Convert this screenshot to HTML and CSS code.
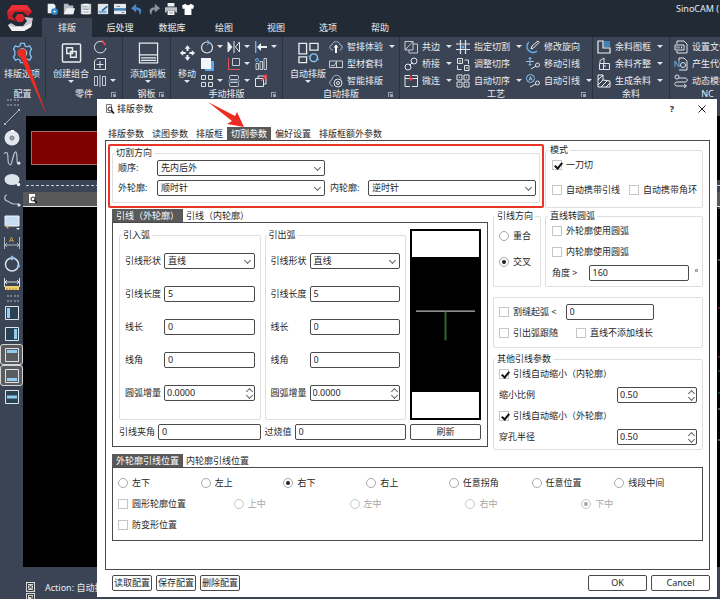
FILE: index.html
```html
<!DOCTYPE html>
<html lang="zh-CN">
<head>
<meta charset="utf-8">
<meta name="viewport" content="width=device-width, initial-scale=1">
<title>SinoCAM</title>
<link rel="stylesheet" href="styles.css">
</head>
<body>
<div class="app">
  <header class="header">
    <svg class="logo" viewBox="0 0 42 37" aria-hidden="true">
      <path d="m7 12 5-7h15l5 7-4 4-5-4h-8l-3 4 4 5-8-2z" fill="#c9202b"/>
      <path d="m7 12 5-7h15l5 7-5-2-12 0z" fill="#ee2f3a"/>
      <path d="m33 18-2 9-7 4H12l-4-6 3-2 5 3h7l4-5-3-4z" fill="#c6c6ca"/>
      <path d="m8 25 5 2h10l9-4-1 4-7 4H12z" fill="#f1f1f4"/>
      <path d="m15 18 2.500-4h5l2.500 4-2.500 4h-5z" fill="#e02833"/>
    </svg>
    <div class="header-main">
      <div class="quick">
        <nav class="quick-icons" aria-label="快速访问">
          <svg viewBox="0 0 14 14"><path d="M2 1h7l2 2v9H2z" fill="#eef1f4"/><circle cx="10" cy="10" r="4" fill="#2d87c6"/><circle cx="10" cy="10" r="1.200" fill="#fff"/></svg>
          <svg viewBox="0 0 14 14"><path d="M1 1h5l1 2h5v10H1z" fill="#b4babf"/><path d="M4 6h10l-2 7H1z" fill="#eef0f2"/></svg>
          <svg viewBox="0 0 14 14"><path d="M1 1h12v12H1z" fill="#ccd1d6"/><path d="M4 1h6v4H4zM3 8h8v5H3z" fill="#f4f6f8"/><path d="M4 7.500h6M4 4h5M4 10.500h6" stroke="#88919b"/></svg>
          <svg viewBox="0 0 14 14"><path d="M1 1h12v12H1z" fill="#dfe5ea"/><path d="M2 9h9v3H2z" fill="#7fb0d6"/><path d="m6 9 6-5" stroke="#27689d" stroke-width="2"/></svg>
          <svg viewBox="0 0 14 14"><path d="M0 1h14v12H0z" fill="#e6eaee"/><path d="M0 6h14v3H0z" fill="#3f81b3"/><path d="M3 4h4m2 7h3" stroke="#64727f"/></svg>
          <svg viewBox="0 0 14 14"><path d="M10 14c4-4 2-9-4-9V1L0 6l6 5V8c3 0 4 2 4 6z" fill="#4a86c4"/></svg>
          <svg viewBox="0 0 14 14"><path d="M4 14C0 10 2 5 8 5V1l6 5-6 5V8c-3 0-4 2-4 6z" fill="#8b949d"/></svg>
          <svg viewBox="0 0 14 14"><path d="M3 0h8v4H3zM3 9h8v5H3z" fill="#eef0f2"/><path d="M0 5h14v6h-2V9H2v2H0z" fill="#bdc3c9"/><path d="M5 11.500h4" stroke="#7b8590"/></svg>
          <svg viewBox="0 0 14 14"><path d="M4 1 0 3l1 4 2-.5V14h8V6.500l2 .5 1-4-4-2c-1 2-5 2-6 0z" fill="#fff"/></svg>
        </nav>
        <span class="app-title">SinoCAM (</span>
      </div>
      <nav class="menu" aria-label="功能区">
        <button class="on">排版</button><button>后处理</button><button>数据库</button><button>绘图</button><button>视图</button><button>选项</button><button>帮助</button>
      </nav>
    </div>
  </header>

  <div class="ribbon">
    <section class="group">
      <div class="tools">
        <button class="big flush"><svg viewBox="0 0 22 22" fill="none"><path d="M9 1h4l.7 2.700 2 .9L18.500 3.500 20.500 7 19 9v4l1.500 2-2 3.500-2.800-1.100-2 .9L13 21H9l-.7-2.700-2-.9L3.500 18.500l-2-3.500L3 13V9L1.500 7l2-3.500 2.800 1.100 2-.9z" stroke="#86bdea" stroke-width="1.400"/><circle cx="11" cy="11" r="4.500" stroke="#c8d6e4"/></svg><span>排版选项</span></button>
      </div>
      <footer>配置</footer>
    </section>

    <section class="group">
      <div class="tools">
        <button class="big"><svg viewBox="0 0 22 22" fill="none" stroke="#e8ecf0" stroke-width="1.500"><rect x="1.500" y="1.500" width="19" height="19" rx="1"/><path d="M6 5.500h6v6H6zM10 9.500h6v6h-6z"/></svg><span>创建组合</span><i class="caret"></i></button>
        <div class="stack icons">
          <button><svg viewBox="0 0 14 14" fill="none"><path d="M10 2A5.800 5.800 0 1 0 13 8" stroke="#dfe4e9"/><path d="M9 .5 12.500 5" stroke="#ef4650" stroke-width="1.600"/></svg></button>
          <button><svg viewBox="0 0 14 14" fill="none" stroke="#dfe4e9"><path d="M4 1.500h8.500v11h-11V4zM7 4v7M3.500 7.500h7"/></svg></button>
          <button><svg viewBox="0 0 14 14" fill="none" stroke="#c6ccd3"><path d="M1.500 2.500h3v9h-3zM9.500 2.500h3v9h-3zM7 1v12"/></svg><i class="caret"></i></button>
        </div>
      </div>
      <footer>零件<i class="launch"></i></footer>
    </section>

    <section class="group">
      <div class="tools">
        <button class="big"><svg viewBox="0 0 22 22" fill="none" stroke="#e8ecf0" stroke-width="1.300"><path d="M1.500.7h19v20.600h-19zM1.500 13h19M3 16h16M3 18.600h16"/></svg><span>添加钢板</span><i class="caret"></i></button>
      </div>
      <footer>钢板<i class="launch"></i></footer>
    </section>

    <section class="group">
      <div class="tools">
        <button class="big narrow"><svg viewBox="0 0 22 22" fill="#eef1f4"><path d="m11 3 3 3.500h-2V9h-2V6.500H8zM11 19l3-3.500h-2V13h-2v2.500H8zM3 11l3.500-3v2H9v2H6.500v2zM19 11l-3.500-3v2H13v2h2.500v2z"/></svg><span>移动</span><i class="caret"></i></button>
        <div class="stack icons">
          <button><svg viewBox="0 0 14 14" fill="none"><circle cx="7" cy="7.500" r="5.500" stroke="#dfe4e9" stroke-width="1.200"/><path d="M7 0 10 2.500 7 5" stroke="#64b2f0"/></svg><i class="caret"></i></button>
          <button><svg viewBox="0 0 14 14"><path d="M5 4h9v10H5z" fill="#5aa9ec"/><path d="M1 1h10v11H1z" fill="#f2f5f8"/></svg></button>
          <button><svg viewBox="0 0 14 14" fill="none" stroke="#dfe4e9"><path d="M1.500 1.500h4v4h-4zM8.500 1.500h4v4h-4zM1.500 8.500h4v4h-4zM8.500 8.500h4v4h-4z"/></svg><i class="caret"></i></button>
        </div>
        <div class="stack icons">
          <button><svg viewBox="0 0 14 14" fill="none" stroke="#dfe4e9"><path d="M1 2v10l4-5z" fill="#f0f3f6"/><path d="M12.500 2v10l-4-5zM7 1v12"/></svg><i class="caret"></i></button>
          <button><svg viewBox="0 0 14 14" fill="none"><path d="M5.500 1.500h7v7h-7z" stroke="#c6ccd3"/><path d="M1.500 1v11.500H13" stroke="#e2505d"/></svg><i class="caret"></i></button>
          <button><svg viewBox="0 0 14 14" fill="none" stroke="#c6ccd3"><rect x="2.500" y="1.500" width="9" height="4" rx="1"/><rect x="2.500" y="8.500" width="9" height="4" rx="1"/><path d="M1 7h12" stroke="#7b9ab8"/></svg><i class="caret"></i></button>
        </div>
        <div class="stack icons">
          <button><svg viewBox="0 0 14 14"><path d="M1 1h1.400v12H1z" fill="#64b2f0"/><path d="m3 7 4-4v3h6v2H7v3z" fill="#eef1f4"/></svg><i class="caret"></i></button>
          <button><svg viewBox="0 0 14 14" fill="none" stroke="#c6ccd3"><path d="M2 6.500h2.500v6H2zM6 4.500h2.500v8H6zM10 1.500h2.500v11H10z"/><circle cx="3" cy="3" r="1.500" stroke="#64b2f0"/></svg></button>
          <button><svg viewBox="0 0 14 14" fill="none"><path d="M1.500 4.500h8v8h-8zM4 4V2h8v8h-2" stroke="#dfe4e9"/><path d="m7 7 5-5M9 1.500h3.500V5" stroke="#ef4650" stroke-width="1.300"/></svg></button>
        </div>
      </div>
      <footer>手动排版<i class="launch"></i></footer>
    </section>

    <section class="group">
      <div class="tools">
        <button class="big"><svg viewBox="0 0 22 22" fill="none" stroke="#e8ecf0" stroke-width="1.400"><path d="M1 1h8v11H1zM12.500 1H21v7h-8.500zM1 15h8v6H1z"/><circle cx="16.500" cy="16" r="4" stroke="#9fcdf2"/><path d="m11 14 2 1 1-2.500M22 18l-2-1-1 2.500" stroke="#64b2f0"/></svg><span>自动排版</span><i class="caret"></i></button>
        <div class="stack">
          <button><svg viewBox="0 0 14 14" fill="none"><path d="M4 10C0 10 0 5 3 5c1-5 8-4 8 0 3 0 3 5-.5 5" stroke="#9fc3e0"/><path d="m7 4.500 2.500 3H8V13H6V7.500H4.500z" fill="#fff"/></svg><span>智排体验</span><i class="caret"></i></button>
          <button><svg viewBox="0 0 14 14" fill="none" stroke="#c6ccd3"><path d="M.5 4h13v6.500H.5zM2 8.500h3.500l2-4v6"/></svg><span>型材套料</span></button>
          <button><svg viewBox="0 0 14 14" fill="none"><path d="M4 12C0 12 0 6 3 6c0-6 8-6 9-1" stroke="#9fb7cc"/><circle cx="9" cy="9" r="4" stroke="#dfe4e9"/><circle cx="9" cy="9" r="1.500" stroke="#dfe4e9"/></svg><span>智能排版</span></button>
        </div>
      </div>
      <footer>自动排版<i class="launch"></i></footer>
    </section>

    <section class="group">
      <div class="tools trio">
        <div class="stack">
          <button><svg viewBox="0 0 14 14" fill="none" stroke="#c6ccd3"><path d="M1 1.500h8V10H1zM5 10v3h8.500V4H9M1 10l8-8.500"/></svg><span>共边</span><i class="caret"></i></button>
          <button><svg viewBox="0 0 14 14" fill="none" stroke="#dfe4e9"><circle cx="10" cy="4" r="3"/><circle cx="4" cy="10" r="3"/><path d="m5.500 8.500 3-3"/></svg><span>桥接</span><i class="caret"></i></button>
          <button><svg viewBox="0 0 14 14" fill="none" stroke="#dfe4e9"><path d="M6 1.500H1v11h5M8 1.500h5.500v11H8M1 4.500h12.500"/><path d="M6.500 2v5M5 5h4" stroke="#ef4650"/></svg><span>微连</span><i class="caret"></i></button>
        </div>
        <div class="stack">
          <button><svg viewBox="0 0 14 14" fill="none" stroke="#dfe4e9" stroke-width="1.200"><path d="M4.500 0v14M9.500 0v14M0 4h14M0 9.500h14"/><circle cx="7" cy="7" r="1.500" fill="#64b2f0" stroke="none"/></svg><span>指定切割</span><i class="caret"></i></button>
          <button><svg viewBox="0 0 14 14" fill="none" stroke="#dfe4e9"><path d="M1.500 1.500h5v5h-5zM8.500 3h4v4M8.500 8.500h4.500v5H8.500zM5.500 12.500h-4v-4M4 3v2.500M11 10v2"/></svg><span>调整切序</span></button>
          <button><svg viewBox="0 0 14 14" fill="none" stroke="#dfe4e9"><path d="M1 1h5v5H1zM8 1h5v5H8zM1 8h5v5H1zM8 8h5v5H8zM3 3.500h1M10 3.500h1M3 10.500h1M10 10.500h1"/></svg><span>自动切序</span><i class="caret"></i></button>
        </div>
        <div class="stack">
          <button><svg viewBox="0 0 14 14" fill="none"><path d="M3 2a6 6 0 1 0 8 9" stroke="#64b2f0" stroke-width="1.300"/><path d="m5 9 1-3 6-5 1 1.500L7.500 8z" stroke="#eef1f4"/></svg><span>修改旋向</span></button>
          <button><svg viewBox="0 0 14 14" fill="none"><path d="M4 .5v8M0 4.500h8M2.500 2 4 .5 5.500 2M2.500 7 4 8.500 5.500 7" stroke="#8cc4f0"/><circle cx="11.500" cy="8" r="2" stroke="#dfe4e9"/><path d="m5 12 5-3" stroke="#dfe4e9"/></svg><span>移动引线</span></button>
          <button><svg viewBox="0 0 14 14" fill="none"><circle cx="4.500" cy="4.500" r="4" stroke="#8cc4f0"/><path d="m3 6.500 1.500-4 1.500 4M3.500 5h2" stroke="#8cc4f0"/><circle cx="11.500" cy="9" r="2" stroke="#dfe4e9"/><path d="m4 13 6-3" stroke="#dfe4e9"/></svg><span>自动引线</span><i class="caret"></i></button>
        </div>
      </div>
      <footer>工艺<i class="launch"></i></footer>
    </section>

    <section class="group">
      <div class="tools">
        <div class="stack">
          <button><svg viewBox="0 0 14 14" fill="none"><path d="M6 1H1v12h12V8H6z" stroke="#eef1f4" stroke-width="1.200"/><path d="M7 1h6v6H7z" fill="#3f83b8"/></svg><span>余料图框</span><i class="caret"></i></button>
          <button><svg viewBox="0 0 14 14" fill="none" stroke="#dfe4e9"><path d="M2.500 6.500h10v6h-10zM6.500 6.500v6M3 6V3.500L7 1v5M6 9h3"/></svg><span>余料齐整</span><i class="caret"></i></button>
          <button><svg viewBox="0 0 14 14" fill="none" stroke="#eef1f4"><path d="M1 1h5v5l7 1v6H1zM1 6l5-5M1 11l5-5M4 13l6-6M9 13l4-4"/></svg><span>生成余料</span><i class="caret"></i></button>
        </div>
      </div>
      <footer>余料</footer>
    </section>

    <section class="group">
      <div class="tools">
        <div class="stack">
          <button><svg viewBox="0 0 14 14" fill="none" stroke="#dfe4e9"><path d="M3 4V1h7l3 3v9H3v-2M1 5h9v5H1zM3 6.500v2M5 6.500v2M7.500 6.500v2"/></svg><span>设置文件</span></button>
          <button><svg viewBox="0 0 14 14" fill="none" stroke="#dfe4e9"><path d="M5 4V1h5l3 3v9H5"/><path d="M1 10V4l4 6V4" stroke="#64b2f0"/><circle cx="9" cy="8" r="2.500"/></svg><span>产生代码</span></button>
          <button><svg viewBox="0 0 14 14" fill="none" stroke="#dfe4e9"><circle cx="3" cy="3" r="2"/><path d="M5 4h6c3 0 3 4 0 4H3c-3 0-3 4 0 4h9M10 10l2.500 2-2.500 2"/></svg><span>动态模拟</span></button>
        </div>
      </div>
      <footer>NC</footer>
    </section>
  </div>

  <div class="body">
    <aside class="rail">
      <i class="grip"></i>
      <button><svg viewBox="0 0 18 18" fill="none" stroke="#aeb6bf"><path d="M2 16 16 2"/><path d="M1 15h2v2H1zM15 1h2v2h-2z" fill="#aeb6bf" stroke="none"/></svg></button>
      <button><svg viewBox="0 0 18 18"><circle cx="9" cy="9" r="7.500" fill="#e3e8ee"/><circle cx="9" cy="9" r="2" fill="none" stroke="#5b6675"/><circle cx="9" cy="9" r=".8" fill="#333d4b"/><path d="M8 1h3v2H8z" fill="#fff"/></svg></button>
      <button><svg viewBox="0 0 18 18" fill="none" stroke="#b8c0ca" stroke-width="1.200"><path d="M1 4C5-1 5 6 5 10s3 8 4 1l2-7c2-5 3 0 3 4s0 8 3 5"/><circle cx="16" cy="13" r="1.500" fill="#dfe4ea" stroke="none"/></svg></button>
      <button><svg viewBox="0 0 18 18"><ellipse cx="9" cy="8.500" rx="7.500" ry="5.500" fill="#dce2ea"/><circle cx="15.500" cy="13.500" r="1.800" fill="#eef1f5"/></svg></button>
      <button><svg viewBox="0 0 18 18" fill="none" stroke="#b8c0ca" stroke-width="1.200"><path d="M4 3C1 3 1 8 4 9s4 3 7 3h5"/><circle cx="16" cy="13" r="1.600" fill="#dfe4ea" stroke="none"/></svg></button>
      <button><svg viewBox="0 0 18 18"><path d="M2 3h14v10H2z" fill="#c7ddf5" stroke="#f1f5f9"/><path d="m2 11 4 4-2 .5z" fill="#d8b45c"/><path d="m13 15 2 2 2-2z" fill="#e7ebef"/></svg></button>
      <button><svg viewBox="0 0 18 18" fill="none" stroke="#aeb6bf"><path d="M1.500 3v12M16.500 3v12M2 11h14M4 9l-2 2 2 2M14 9l2 2-2 2"/><path d="m6.500 8 2-5 2 5M7 6.500h3" stroke="#bd9a45"/></svg></button>
      <button><svg viewBox="0 0 18 18" fill="none" stroke="#d7e1ea" stroke-width="1.500"><circle cx="9" cy="9.500" r="6.500"/><path d="M8 1l3 2-3 2" stroke="#8cc4f0"/><circle cx="15.500" cy="11" r="1.500" fill="#8cc4f0" stroke="none"/></svg></button>
      <button><svg viewBox="0 0 18 18" fill="none" stroke="#d7dde4"><path d="M1.500 2v9M16.500 2v9M2 6h14M4 4 2 6l2 2M14 4l2 2-2 2"/><path d="M2 10h14v4H2z" fill="#f0cf72" stroke="none"/><path d="M4 12v2m3-2v2m3-2v2m3-2v2" stroke="#b18c2c"/></svg></button>
      <i class="grip"></i>
      <button><svg viewBox="0 0 18 18"><path d="M2.500 2.500h13v13h-13z" fill="#2b4254" stroke="#dfe4ea"/><path d="M4 4h3v10H4z" fill="#8fcdf5"/></svg></button>
      <button><svg viewBox="0 0 18 18"><path d="M2.500 2.500h13v13h-13z" fill="#2b4254" stroke="#dfe4ea"/><path d="M11 4h3v10h-3z" fill="#8fcdf5"/></svg></button>
      <button class="held"><svg viewBox="0 0 18 18"><path d="M2.500 2.500h13v13h-13z" fill="#5a5b5e" stroke="#dfe4ea"/><path d="M4 4h10v3H4z" fill="#8fcdf5"/></svg></button>
      <button class="held"><svg viewBox="0 0 18 18"><path d="M2.500 2.500h13v13h-13z" fill="#5a5b5e" stroke="#dfe4ea"/><path d="M4 11h10v3H4z" fill="#8fcdf5"/></svg></button>
      <button><svg viewBox="0 0 18 18"><path d="M2.500 2.500h13v13h-13z" fill="#2b4254" stroke="#dfe4ea"/><path d="M4 7.500h10v3H4z" fill="#8fcdf5"/></svg></button>
    </aside>
    <main class="work">
      <div class="thumb"><div class="plate"></div></div>
      <div class="dashes"></div>
      <div class="doc-bar"><svg viewBox="0 0 10 10"><path d="M1 0h6v9H1z" fill="#fff"/><circle cx="5" cy="5" r="2" fill="none" stroke="#222"/><path d="m6 6 3 3" stroke="#111" stroke-width="1.500"/></svg></div>
      <div class="canvas"><svg viewBox="0 0 2 360" aria-hidden="true"><path d="M0 1h2M0 53h2M0 202h2M0 233h2" stroke="#aaa"/><path d="M0 101h2M0 150h2" stroke="#a33"/><path d="M0 164h2M0 186h2" stroke="#284"/></svg></div>
      <div class="log">
        <svg viewBox="0 0 9 21" fill="none" stroke="#333"><path d="M0 0h9v10H0zM0 11h9v10H0z" fill="#d9d9d9" stroke="none"/><path d="M1.500 1.500h6v7h-6zM2.500 3l4 4m0-4-4 4M1.500 12.500h6v7h-6zM3 14.500h3v3"/></svg>
        <span>Action: 自动排版</span>
      </div>
    </main>
  </div>
</div>

<svg class="pointer" viewBox="0 0 32 72" aria-hidden="true"><circle cx="7" cy="8" r="4" fill="#ee2b20"/><path d="M4 9 9 6l23 65z" fill="#ee2b20"/></svg>

<div class="dialog" role="dialog" aria-labelledby="dialog-title">
  <svg class="tab-arrow" viewBox="0 0 36 26" aria-hidden="true"><path d="M0 0 27 14l2-4 7 15-17-3 5-3z" fill="#ee2b20"/></svg>
  <div class="title-bar">
    <svg viewBox="0 0 10 10"><path d="M1.500.5h5v8h-5z" fill="#fff" stroke="#777"/><circle cx="5" cy="5" r="2" fill="none" stroke="#222"/><path d="m6.500 6.500 2.500 3" stroke="#111" stroke-width="1.500"/></svg>
    <h1 id="dialog-title">排版参数</h1>
    <button class="help" aria-label="帮助">?</button>
    <button class="close" aria-label="关闭"><svg viewBox="0 0 10 10" stroke="#222"><path d="m1.500 1.500 7 7m0-7-7 7"/></svg></button>
  </div>

  <nav class="tabs main-tabs">
    <button>排版参数</button><button>读图参数</button><button>排版框</button><button class="on">切割参数</button><button>偏好设置</button><button>排版框额外参数</button>
  </nav>

  <div class="page">
    <div class="row first">
      <div class="marked">
        <fieldset class="box cut">
          <legend>切割方向</legend>
          <div class="pair">
            <label for="order">顺序:</label>
            <span class="pick"><select id="order"><option>先内后外</option></select></span>
          </div>
          <div class="pair">
            <label for="outer">外轮廓:</label>
            <span class="pick"><select id="outer"><option>顺时针</option></select></span>
            <label for="inner">内轮廓:</label>
            <span class="pick"><select id="inner"><option>逆时针</option></select></span>
          </div>
        </fieldset>
      </div>
      <fieldset class="box mode">
        <legend>模式</legend>
        <div class="line"><label><input type="checkbox" checked>一刀切</label></div>
        <div class="line"><label><input type="checkbox">自动携带引线</label><label><input type="checkbox">自动携带角环</label></div>
      </fieldset>
    </div>

    <div class="row second">
      <div class="lead">
        <nav class="tabs sub-tabs"><button class="on">引线（外轮廓）</button><button>引线（内轮廓）</button></nav>
        <div class="panel lead-panel">
          <fieldset class="box arc">
            <legend>引入弧</legend>
            <div class="field"><label for="in-shape">引线形状</label><span class="pick"><select id="in-shape"><option>直线</option></select></span></div>
            <div class="field"><label for="in-len">引线长度</label><input id="in-len" type="text" value="5"></div>
            <div class="field"><label for="in-line">线长</label><input id="in-line" type="text" value="0"></div>
            <div class="field"><label for="in-angle">线角</label><input id="in-angle" type="text" value="0"></div>
            <div class="field"><label for="in-inc">圆弧增量</label><span class="spin"><input id="in-inc" type="number" step="0.0001" value="0.0000"></span></div>
          </fieldset>
          <fieldset class="box arc">
            <legend>引出弧</legend>
            <div class="field"><label for="out-shape">引线形状</label><span class="pick"><select id="out-shape"><option>直线</option></select></span></div>
            <div class="field"><label for="out-len">引线长度</label><input id="out-len" type="text" value="5"></div>
            <div class="field"><label for="out-line">线长</label><input id="out-line" type="text" value="0"></div>
            <div class="field"><label for="out-angle">线角</label><input id="out-angle" type="text" value="0"></div>
            <div class="field"><label for="out-inc">圆弧增量</label><span class="spin"><input id="out-inc" type="number" step="0.0001" value="0.0000"></span></div>
          </fieldset>
          <div class="preview"><svg viewBox="0 0 68 136" preserveAspectRatio="none" aria-label="预览"><path d="M0 0h68v136H0z"/><path d="M4 54.500h60" stroke="#eee"/><path d="M34 55v29" stroke="#2c6b31" stroke-width="2"/></svg></div>
          <div class="field tail"><label for="clamp">引线夹角</label><input id="clamp" type="text" value="0"></div>
          <div class="field tail"><label for="burn">过烧值</label><input id="burn" type="text" value="0"></div>
          <button class="btn">刷新</button>
        </div>
      </div>

      <div class="side">
        <div class="side-top">
          <fieldset class="box direction">
            <legend>引线方向</legend>
            <label><input type="radio" name="dir">重合</label>
            <label><input type="radio" name="dir" checked>交叉</label>
          </fieldset>
          <fieldset class="box mode">
            <legend>直线转圆弧</legend>
            <div class="line"><label><input type="checkbox">外轮廓使用圆弧</label></div>
            <div class="line"><label><input type="checkbox">内轮廓使用圆弧</label></div>
            <div class="line degree"><label for="deg">角度 &gt;</label><input id="deg" type="text" value="160"><span>°</span></div>
          </fieldset>
        </div>
        <fieldset class="box plain">
          <div class="line"><label><input type="checkbox">割缝起弧 &lt;</label><input class="kerf" type="text" value="0" aria-label="割缝起弧"></div>
          <div class="line wide"><label><input type="checkbox">引出弧跟随</label><label><input type="checkbox">直线不添加线长</label></div>
        </fieldset>
        <fieldset class="box other">
          <legend>其他引线参数</legend>
          <div class="line inset"><label><input type="checkbox" checked>引线自动缩小（内轮廓）</label></div>
          <div class="line spread"><label for="ratio">缩小比例</label><span class="spin"><input id="ratio" type="number" step="0.01" value="0.50"></span></div>
          <div class="line inset"><label><input type="checkbox" checked>引线自动缩小（外轮廓）</label></div>
          <div class="line spread"><label for="pierce">穿孔半径</label><span class="spin"><input id="pierce" type="number" step="0.01" value="0.50"></span></div>
        </fieldset>
      </div>
    </div>

    <div class="third">
      <nav class="tabs sub-tabs"><button class="on">外轮廓引线位置</button><button>内轮廓引线位置</button></nav>
      <div class="panel place">
        <div class="seven">
          <label><input type="radio" name="pos">左下</label><label><input type="radio" name="pos">左上</label><label><input type="radio" name="pos" checked>右下</label><label><input type="radio" name="pos">右上</label><label><input type="radio" name="pos">任意拐角</label><label><input type="radio" name="pos">任意位置</label><label><input type="radio" name="pos">线段中间</label>
        </div>
        <div class="five">
          <label><input type="checkbox">圆形轮廓位置</label><label class="off"><input type="radio" name="circ" disabled>上中</label><label class="off"><input type="radio" name="circ" disabled>左中</label><label class="off"><input type="radio" name="circ" disabled>右中</label><label class="off"><input type="radio" name="circ" disabled checked>下中</label>
        </div>
        <div><label><input type="checkbox">防变形位置</label></div>
      </div>
    </div>
  </div>

  <div class="actions">
    <button class="btn">读取配置</button><button class="btn">保存配置</button><button class="btn">删除配置</button>
    <button class="btn long push">OK</button><button class="btn long">Cancel</button>
  </div>
</div>
</body>
</html>
```
FILE: styles.css
```css
* { box-sizing: border-box; }

:root {
  --ink: #262626;
  --line: #4a4a4a;
  --soft: #dedede;
  --slate: #3b4454;
  --night: #222b35;
  --red: #e8352a;
}

body {
  margin: 0;
  height: 100vh;
  position: relative;
  overflow: hidden;
  font: 9px/12px "Noto Sans", "Noto Sans CJK SC", sans-serif;
  color: var(--ink);
  background: var(--slate);
}

button, input, select { font: inherit; color: inherit; margin: 0; }
button { border: 0; padding: 0; background: none; white-space: nowrap; }
svg { display: block; flex: none; }

/* application window */
.app { height: 100%; display: flex; flex-direction: column; color: #e9edf1; }

.header { display: flex; background: var(--night); }
.logo { width: 42px; height: 37px; }
.header-main { flex: 1; min-width: 0; }
.quick { height: 18px; display: flex; align-items: center; justify-content: space-between; padding-left: 4px; }
.quick-icons { display: flex; gap: 5px; }
.quick-icons svg { width: 12px; height: 12px; }
.app-title { padding-right: 1px; }
.menu { display: flex; }
.menu button { width: 52px; height: 19px; }
.menu .on { width: 50px; margin-right: 2px; background: var(--slate); }

.ribbon {
  display: grid;
  grid-template-columns: 46px 77px 48px 112px 117px 193px 77px 76px;
  height: 62px;
  flex: none;
  overflow: hidden;
  background: var(--slate);
}
.group { display: flex; flex-direction: column; border-right: 1px solid #2a323e; }
.tools { display: flex; height: 52px; padding: 1px 0 0 4px; }
.trio { justify-content: space-between; }
.big { width: 42px; display: flex; flex-direction: column; align-items: center; padding-top: 4px; }
.big svg { width: 21px; height: 22px; margin-bottom: 4px; }
.flush { margin-left: -3px; }
.narrow { width: 24px; }
.stack { display: grid; grid-template-rows: repeat(3, 17px); }
.stack button { display: flex; align-items: center; gap: 4px; }
.stack svg { width: 14px; height: 14px; }
.stack .caret { margin-left: 2px; }
.icons { width: 27px; padding-left: 1px; }
.icons .caret { margin-left: -1px; }
.caret { border: 3px solid transparent; border-top-color: #dfe4e9; border-bottom: 0; }
.group footer { position: relative; text-align: center; line-height: 10px; }
.launch {
  position: absolute;
  right: 6px;
  top: 3px;
  width: 5px;
  height: 5px;
  border: solid #9aa3ae;
  border-width: 1px 0 0 1px;
}
.launch::after { content: ""; position: absolute; right: 0; bottom: 0; width: 3px; height: 3px; background: #9aa3ae; }

.body { flex: 1; display: flex; min-height: 0; }
.rail { width: 23px; display: flex; flex-direction: column; }
.rail button { height: 21px; display: grid; place-items: center; }
.rail svg { width: 18px; height: 18px; }
.grip { height: 7px; margin: 0 4px 0 7px; border: dotted #737d8b; border-width: 2px 0; background: none; }
.rail .held { border: 1px solid #d5d5d5; border-radius: 3px; background: #5a5b5e; }

.work { flex: 1; display: flex; flex-direction: column; padding-top: 17px; min-width: 0; }
.thumb { height: 64px; margin-left: 3px; padding: 15px 5px; background: #000; }
.plate { height: 34px; background: #800000; border: 1px solid #a96b6b; }
.dashes { margin: 5px 0 6px 3px; border-top: 1px dashed #c9d0d8; }
.doc-bar { height: 15px; padding: 2px 5px; background: #595959; border-bottom: 1px solid #ddd; }
.doc-bar svg { width: 10px; height: 10px; }
.canvas { flex: 1; background: #000; display: flex; justify-content: flex-end; }
.canvas svg { width: 2px; height: 360px; }
.log { height: 32px; display: flex; gap: 10px; padding: 15px 0 0 3px; overflow: hidden; }
.log svg { width: 9px; height: 21px; }

.pointer { position: absolute; left: 15px; top: 45px; width: 32px; height: 72px; }

/* settings dialog */
.dialog {
  position: absolute;
  left: 97px;
  right: 3px;
  top: 99px;
  bottom: 2px;
  display: flex;
  flex-direction: column;
  padding: 0 7px 6px 8px;
  background: #fff;
}
.tab-arrow { position: absolute; left: 111px; top: 3px; width: 36px; height: 26px; }
.title-bar { height: 28px; display: flex; align-items: flex-start; padding: 4px 3px 0 0; }
.title-bar svg { width: 10px; height: 10px; margin-top: 1px; }
.title-bar h1 { flex: 1; margin: 0 0 0 2px; font: inherit; }
.help { font-weight: bold; margin-right: 23px; }

.tabs { display: flex; }
.tabs button { height: 13px; line-height: 13px; padding: 0 4px; }
.main-tabs { margin-left: -1px; }
.sub-tabs button { padding: 0 3px; }
.sub-tabs .on { padding: 0 4px; }
.tabs .on { background: #595959; color: #fff; }

.page { flex: 1; padding: 3px 6px; border: 1px solid var(--line); }
.row { display: flex; }
.first { gap: 1px; }
.second { gap: 5px; margin: 1px 0 4px; }

.marked { flex: 1; margin-left: -4px; padding: 1px 2px 3px; border: 2px solid var(--red); border-radius: 2px; }
.box { margin: 0; min-width: 0; border: 1px solid var(--soft); border-radius: 2px; padding: 1px 6px 5px; }
.box legend { padding: 0 2px; margin-left: -4px; line-height: 12px; white-space: nowrap; }

.cut { display: grid; gap: 4px; padding: 1px 3px 6px 5px; }
.pair { display: grid; grid-template-columns: 39px 1fr 43px 1fr; align-items: center; height: 16px; }
.pair > :nth-child(3) { padding-left: 5px; }

.pick, .spin { position: relative; display: block; height: 16px; }
select, input[type="text"], input[type="number"] {
  appearance: none;
  display: block;
  width: 100%;
  min-width: 0;
  height: 16px;
  padding: 0 3px;
  line-height: 14px;
  border: 1px solid var(--line);
  border-radius: 2px;
  background: #fff;
}
input[type="text"], input[type="number"] { padding-bottom: 1px; }
input::-webkit-inner-spin-button { appearance: none; margin: 0; }
.pick::after, .spin::before, .spin::after {
  content: "";
  position: absolute;
  right: 5px;
  top: 4px;
  width: 5px;
  height: 5px;
  border: solid #666;
  border-width: 0 1px 1px 0;
  transform: rotate(45deg);
}
.spin::before, .spin::after { right: 3px; }
.spin::before { top: 4px; transform: rotate(225deg); }
.spin::after { top: 8px; }
.pick::after { width: 4px; height: 4px; top: 5px; }
.spin::before, .spin::after { width: 4px; height: 4px; }
.spin input[type="number"] { padding: 0 2px 1px; }

label { display: flex; align-items: center; white-space: nowrap; }
input[type="checkbox"], input[type="radio"] {
  appearance: none;
  position: relative;
  flex: none;
  width: 10px;
  height: 10px;
  margin-right: 4px;
  border: 1px solid #c6c6c6;
  background: #fff;
}
input[type="radio"] { border-radius: 50%; border-color: #a8a8a8; }
input[type="checkbox"]:checked::after {
  content: "";
  position: absolute;
  left: 3px;
  top: 0;
  width: 3px;
  height: 6px;
  border: solid #111;
  border-width: 0 2px 2px 0;
  transform: rotate(40deg);
}
input[type="radio"]:checked::after { content: ""; position: absolute; inset: 2px; border-radius: 50%; background: #222; }
.off { color: #a6a6a6; }
.off input[type="radio"] { border-color: #c6c6c6; }
.off input[type="radio"]:checked::after { background: #a6a6a6; }

.mode { width: 158px; display: grid; gap: 5px; }
.line { display: flex; align-items: center; gap: 9px; height: 16px; }
.degree { gap: 6px; }
.degree input[type="text"] { width: 100px; margin-left: 5px; }

.lead { flex: 1; min-width: 0; }
.panel { border: 1px solid var(--line); }
.lead-panel {
  display: grid;
  grid-template-columns: 1fr 1fr 71px;
  gap: 4px;
  padding: 6px;
}
.arc { display: grid; gap: 17px; padding: 12px 5px 18px; }
.field { display: grid; grid-template-columns: 39px 1fr; align-items: center; height: 16px; }
.tail:nth-last-child(2) { grid-template-columns: 30px 1fr; }
.preview { padding: 26px 0; border: 2px solid #000; }
.preview svg { width: 100%; height: 100%; }

.btn { height: 16px; min-width: 40px; border: 1px solid var(--line); border-radius: 2px; line-height: 14px; background: #fff; }

.side { width: 210px; }
.side-top { display: flex; justify-content: space-between; margin: 1px 0 10px; }
.direction { width: 48px; display: grid; align-content: start; gap: 10px; padding: 6px 5px; }
.direction label { height: 16px; }
.plain { display: grid; gap: 5px; padding: 6px 5px; margin-bottom: 5px; }
.plain .kerf { width: 88px; }
.plain .wide { gap: 18px; }
.other { display: grid; gap: 5px; padding: 1px 5px 4px; }
.spread { justify-content: space-between; }
.spread .spin { width: 80px; }

.place { display: grid; gap: 5px; padding: 7px 5px; }
.place label { height: 16px; }
.seven { display: grid; grid-template-columns: repeat(7, 1fr); }
.five { display: grid; grid-template-columns: repeat(5, 1fr); }

.actions { display: flex; gap: 4px; padding: 5px 0 0 7px; }
.long { width: 59px; }
.push { margin-left: auto; }
```
